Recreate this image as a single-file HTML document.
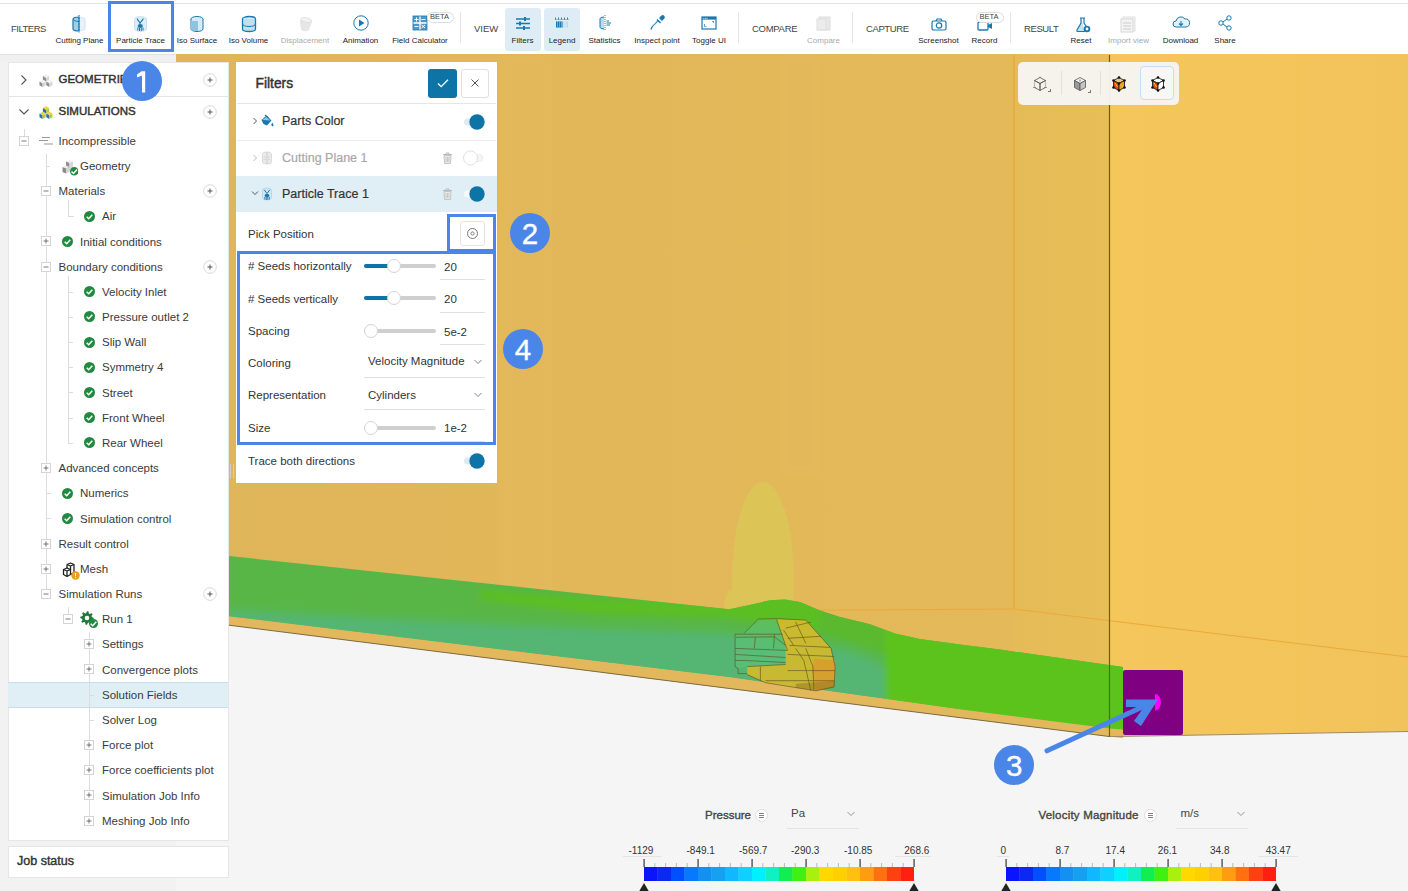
<!DOCTYPE html><html><head><meta charset="utf-8"><style>
html,body{margin:0;padding:0;}
body{width:1408px;height:891px;overflow:hidden;position:relative;background:#f2f2f2;font-family:"Liberation Sans",sans-serif;}
.a{position:absolute;}
.t{position:absolute;white-space:nowrap;}
</style></head><body>

<svg class="a" style="left:0;top:0" width="1408" height="891" viewBox="0 0 1408 891"><rect x="176" y="54" width="1232" height="837" fill="#f5f5f5"/><defs><linearGradient id="gl" x1="0" y1="0" x2="1" y2="0"><stop offset="0" stop-color="#dfb55a"/><stop offset="1" stop-color="#e4b959"/></linearGradient><linearGradient id="gm" x1="0" y1="0" x2="1" y2="0"><stop offset="0" stop-color="#e5bb58"/><stop offset="1" stop-color="#e8be58"/></linearGradient><linearGradient id="gr" x1="0" y1="0" x2="1" y2="0"><stop offset="0" stop-color="#f5c65a"/><stop offset="1" stop-color="#f1c35b"/></linearGradient><filter id="bl" x="-10%" y="-10%" width="120%" height="120%"><feGaussianBlur stdDeviation="3"/></filter><filter id="bl2" x="-10%" y="-10%" width="120%" height="120%"><feGaussianBlur stdDeviation="1.2"/></filter></defs><polygon points="176,54 1014,54 1014,724.5 176,618.5" fill="url(#gl)"/><polygon points="1014,54 1110,54 1110,736.6 1014,724.5" fill="url(#gm)"/><polygon points="1110,54 1408,54 1408,731.5 1110,736.6" fill="url(#gr)"/><rect x="498" y="55" width="55" height="540" fill="#e6bc5f" opacity="0.35" filter="url(#bl)"/><rect x="780" y="55" width="40" height="420" fill="#e6bb5e" opacity="0.3" filter="url(#bl)"/><line x1="1014" y1="55" x2="1014" y2="609" stroke="#e2ad3a" stroke-width="1.6"/><polyline points="700,611 1013.7,609 1408,657" fill="none" stroke="#eaa93a" stroke-width="1"/><path d="M733,605 C728,545 742,482 763,482 C784,482 798,545 793,605 Z" fill="#dcc457"/><path d="M724,610 C724,598 728,590 731,590 C734,590 738,598 738,610 Z" fill="#dcc457"/><polygon points="229,556 729,609.2 745,605.9 770,600.3 785,599.4 800,602 820,610.5 840,617 870,624.3 895,633.6 920,639 960,644.6 1000,649.6 1123,667 1123,729.5 1110,728.5 960,709.3 729,677 229,616.3" fill="#58b646"/><polygon points="229,616.3 729,677 960,709.3 1123,729.5 1123,738.3 229,625.2" fill="#e3b85c"/><clipPath id="gclip"><polygon points="229,556 729,609.2 745,605.9 770,600.3 785,599.4 800,602 820,610.5 840,617 870,624.3 895,633.6 920,639 960,644.6 1000,649.6 1123,667 1123,729.5 1110,728.5 960,709.3 729,677 229,616.3"/></clipPath><g clip-path="url(#gclip)"><g filter="url(#bl)"><polygon points="200,610 400,621 560,629 729,635 760,640 850,652 885,668 885,760 200,760" fill="#54b573"/><polygon points="200,604 560,622 729,628 850,643 885,655 885,668 850,652 760,640 729,635 560,629 400,621 200,610" fill="#57b65a" opacity="0.7"/><polygon points="480,590 580,598 729,604 745,600 770,595 785,594 800,597 820,605 820,630 729,618 600,614 480,600" fill="#5bc01d" opacity="0.9"/><polygon points="885,600 1200,600 1200,760 885,760" fill="#5cc31c"/><polygon points="820,600 885,600 885,655 850,643 820,635" fill="#5ab92e"/></g></g><polygon points="735.1,634.2 744.2,633.2 758.3,619.1 776.5,618.6 785.6,645.4 785.6,664.5 747.2,666.6 738.1,668.6 735.1,666.6" fill="#5fc27a" opacity="0.55"/><polygon points="776.5,619.1 805.8,620.1 831.1,648.4 835.1,666.6 834.1,686.8 815.9,690.8 765.4,682.7 747.2,674.6 747.2,666.6 785.6,664.5 785.6,645.4" fill="#d2ba2e" opacity="0.92"/><polygon points="813.9,658.5 835.1,660.5 834.1,686.8 815.9,689.8 811.9,670.6" fill="#d89a2c" opacity="0.8"/><polygon points="795.7,683.7 835.1,680.7 834.1,687.8 815.9,690.8 795.7,687.8" fill="#8a6a20" opacity="0.45"/><g fill="none" stroke="#5a4a20" stroke-width="0.7" opacity="0.85"><polyline points="758.3,619.1 776.5,618.6 805.8,620.1"/><polyline points="744.2,633.2 758.3,619.1"/><polyline points="735.1,634.2 782.6,634.2"/><polyline points="735.1,634.2 735.1,666.6 738.1,668.6 738.1,673.6 747.2,673.6"/><polyline points="736.1,637.3 774.5,636.8 785.6,645.4"/><polyline points="755.3,637.3 754.3,648.4"/><polyline points="774.5,634.2 773.5,648.4"/><polyline points="735.1,648.4 787.6,650.4"/><polyline points="735.1,654.4 785.6,657.5"/><polyline points="735.1,660.5 745.2,660.5 785.6,662.5"/><polyline points="747.2,666.6 785.6,664.5"/><polyline points="776.5,619.1 785.6,645.4 787.6,650.4"/><polyline points="805.8,620.1 831.1,648.4 835.1,666.6 834.1,686.8 815.9,690.8 765.4,682.7 747.2,674.6"/><polyline points="785.6,628.2 810.9,622.1"/><polyline points="787.6,638.3 821.0,636.3"/><polyline points="789.6,645.4 830.1,647.4"/><polyline points="795.7,622.1 805.8,643.3"/><polyline points="783.6,630.2 793.7,645.4"/><polyline points="795.7,648.4 803.8,660.5 810.9,690.8"/><polyline points="805.8,648.4 812.9,666.6 813.9,689.8"/><polyline points="787.6,654.4 834.1,656.5"/><polyline points="787.6,670.6 835.1,670.6"/><polyline points="765.4,680.7 834.1,680.7"/><polyline points="760.4,666.6 760.4,680.7"/></g><line x1="176" y1="618.5" x2="1110" y2="736.6" stroke="#7a6a48" stroke-width="1"/><line x1="1110" y1="736.6" x2="1408" y2="731.5" stroke="#9a8a68" stroke-width="1"/><line x1="1109.5" y1="55" x2="1109.5" y2="736.6" stroke="#76581c" stroke-width="1.2"/><rect x="1123" y="670" width="60" height="65" rx="2" fill="#7f0081"/><path d="M1155,694 A6,8.3 0 0 1 1155,710.6 Z" fill="#ff00ff"/></svg>
<div class="a" style="left:0px;top:0px;width:1408px;height:54px;background:#fff;"></div>
<div class="a" style="left:0px;top:3px;width:1408px;height:1px;background:#e4e4e4;"></div>
<div class="a" style="left:0px;top:54px;width:176px;height:8px;background:#f0f0f0;"></div>
<div class="a" style="left:0px;top:54px;width:176px;height:1px;background:#e2e2e2;"></div>
<div class="t" style="left:11px;top:23.96px;font-size:9.5px;line-height:9.5px;color:#444;font-weight:normal;letter-spacing:-0.5px;">FILTERS</div>
<div class="t" style="left:474px;top:23.96px;font-size:9.5px;line-height:9.5px;color:#444;font-weight:normal;">VIEW</div>
<div class="t" style="left:752px;top:23.96px;font-size:9.5px;line-height:9.5px;color:#444;font-weight:normal;letter-spacing:-0.3px;">COMPARE</div>
<div class="t" style="left:866px;top:23.96px;font-size:9.5px;line-height:9.5px;color:#444;font-weight:normal;letter-spacing:-0.4px;">CAPTURE</div>
<div class="t" style="left:1024px;top:23.96px;font-size:9.5px;line-height:9.5px;color:#444;font-weight:normal;letter-spacing:-0.4px;">RESULT</div>
<div class="a" style="left:460px;top:12px;width:1px;height:31px;background:#e6e6e6;"></div>
<div class="a" style="left:738px;top:12px;width:1px;height:31px;background:#e6e6e6;"></div>
<div class="a" style="left:852px;top:12px;width:1px;height:31px;background:#e6e6e6;"></div>
<div class="a" style="left:1010px;top:12px;width:1px;height:31px;background:#e6e6e6;"></div>
<div class="a" style="left:505px;top:8px;width:36px;height:43px;background:#deedf5;border-radius:3px;"></div>
<div class="a" style="left:544px;top:8px;width:36px;height:43px;background:#deedf5;border-radius:3px;"></div>
<div class="t" style="left:-20.5px;width:200px;text-align:center;top:36.83px;font-size:8px;line-height:8px;color:#222;font-weight:normal;">Cutting Plane</div>
<div class="t" style="left:40.5px;width:200px;text-align:center;top:36.83px;font-size:8px;line-height:8px;color:#222;font-weight:normal;">Particle Trace</div>
<div class="t" style="left:97.0px;width:200px;text-align:center;top:36.83px;font-size:8px;line-height:8px;color:#222;font-weight:normal;">Iso Surface</div>
<div class="t" style="left:148.5px;width:200px;text-align:center;top:36.83px;font-size:8px;line-height:8px;color:#222;font-weight:normal;">Iso Volume</div>
<div class="t" style="left:205.0px;width:200px;text-align:center;top:36.83px;font-size:8px;line-height:8px;color:#aaa;font-weight:normal;">Displacement</div>
<div class="t" style="left:260.5px;width:200px;text-align:center;top:36.83px;font-size:8px;line-height:8px;color:#222;font-weight:normal;">Animation</div>
<div class="t" style="left:320.0px;width:200px;text-align:center;top:36.83px;font-size:8px;line-height:8px;color:#222;font-weight:normal;">Field Calculator</div>
<div class="t" style="left:422.5px;width:200px;text-align:center;top:36.83px;font-size:8px;line-height:8px;color:#222;font-weight:normal;">Filters</div>
<div class="t" style="left:462.0px;width:200px;text-align:center;top:36.83px;font-size:8px;line-height:8px;color:#222;font-weight:normal;">Legend</div>
<div class="t" style="left:504.5px;width:200px;text-align:center;top:36.83px;font-size:8px;line-height:8px;color:#222;font-weight:normal;">Statistics</div>
<div class="t" style="left:557.0px;width:200px;text-align:center;top:36.83px;font-size:8px;line-height:8px;color:#222;font-weight:normal;">Inspect point</div>
<div class="t" style="left:609.0px;width:200px;text-align:center;top:36.83px;font-size:8px;line-height:8px;color:#222;font-weight:normal;">Toggle UI</div>
<div class="t" style="left:723.5px;width:200px;text-align:center;top:36.83px;font-size:8px;line-height:8px;color:#aaa;font-weight:normal;">Compare</div>
<div class="t" style="left:838.5px;width:200px;text-align:center;top:36.83px;font-size:8px;line-height:8px;color:#222;font-weight:normal;">Screenshot</div>
<div class="t" style="left:884.5px;width:200px;text-align:center;top:36.83px;font-size:8px;line-height:8px;color:#222;font-weight:normal;">Record</div>
<div class="t" style="left:981.0px;width:200px;text-align:center;top:36.83px;font-size:8px;line-height:8px;color:#222;font-weight:normal;">Reset</div>
<div class="t" style="left:1028.5px;width:200px;text-align:center;top:36.83px;font-size:8px;line-height:8px;color:#aaa;font-weight:normal;">Import view</div>
<div class="t" style="left:1080.5px;width:200px;text-align:center;top:36.83px;font-size:8px;line-height:8px;color:#222;font-weight:normal;">Download</div>
<div class="t" style="left:1125.0px;width:200px;text-align:center;top:36.83px;font-size:8px;line-height:8px;color:#222;font-weight:normal;">Share</div>
<svg class="a" style="left:71px;top:14px;" width="16" height="19" viewBox="0 0 16 19"><path d="M8,3 A6,2.3 0 0 1 14,5.3 V14.7 A6,2.3 0 0 1 8,17 Z" fill="#e6f2f9" stroke="#c4e0ee" stroke-width="0.8"/><path d="M8,3 A6,2.3 0 0 0 2,5.3 V14.7 A6,2.3 0 0 0 8,17 Z" fill="#a3cfe6" stroke="#1a78b0" stroke-width="1.2"/><path d="M2.5,5.3 A6,2.3 0 0 0 8,7.6" fill="none" stroke="#1a78b0" stroke-width="0.9"/><path d="M8,1 V18.5" stroke="#1a78b0" stroke-dasharray="1.2,1.6" stroke-width="1.1"/></svg>
<svg class="a" style="left:133px;top:15px;" width="15" height="18" viewBox="0 0 15 18"><path d="M1.5,4 A6,2.4 0 0 1 13.5,4 V14 A6,2.4 0 0 1 1.5,14 Z" fill="#dcedf6" stroke="#c0deed" stroke-width="0.8"/><path d="M4,3.5 L7,8 L10.5,3.5 M7,8 V9.5" fill="none" stroke="#1a78b0" stroke-width="1.1"/><path d="M4.5,5 L6,6 M10,5 L8.5,6" stroke="#1a78b0" stroke-width="0.8"/><ellipse cx="7.3" cy="11" rx="2.6" ry="2" fill="#1a78b0"/><path d="M4.8,12.5 V15.5 M6.5,13 V16 M8.3,13 V16 M10,12.5 V15.5" stroke="#1a78b0" stroke-width="1"/></svg>
<svg class="a" style="left:188.0px;top:14.5px;" width="18" height="18" viewBox="0 0 18 18"><ellipse cx="9" cy="4" rx="6" ry="2.5" fill="#d6ebf5" stroke="#1a78b0" stroke-width="1"/><path d="M3,4 V14 A6,2.5 0 0 0 15,14 V4" fill="#d6ebf5" stroke="#1a78b0" stroke-width="1"/><path d="M3,6 H10 V16 A6,2.5 0 0 1 3,14 Z" fill="#8cc4e2"/></svg>
<svg class="a" style="left:239.5px;top:14.5px;" width="18" height="18" viewBox="0 0 18 18"><ellipse cx="9" cy="4" rx="6.5" ry="2.5" fill="#d6ebf5" stroke="#1a78b0" stroke-width="1.3"/><path d="M2.5,4 V14 A6.5,2.5 0 0 0 15.5,14 V4" fill="#bfe0f0" stroke="#1a78b0" stroke-width="1.3"/><path d="M2.5,9 A6.5,2.5 0 0 0 15.5,9" fill="none" stroke="#1a78b0" stroke-width="1"/></svg>
<svg class="a" style="left:296.5px;top:14.5px;" width="18" height="18" viewBox="0 0 18 18"><path d="M3,6 C3,3.5 8,2 12,3.5 C15,4.5 16,6 15,7 L12,15 C11,17 5,16.5 4,14.5 Z" fill="#e6e6e6"/><ellipse cx="9.3" cy="5" rx="5.5" ry="2.3" transform="rotate(15 9.3 5)" fill="#f2f2f2" stroke="#dcdcdc" stroke-width="0.7"/></svg>
<svg class="a" style="left:351.5px;top:14.0px;" width="18" height="18" viewBox="0 0 18 18"><circle cx="9" cy="9" r="7.2" fill="#fff" stroke="#1a78b0" stroke-width="1"/><path d="M7,5.5 L12.5,9 L7,12.5 Z" fill="#1a78b0"/></svg>
<svg class="a" style="left:411.0px;top:14.0px;" width="18" height="18" viewBox="0 0 18 18"><rect x="2" y="2" width="14" height="14" fill="#4f98c9"/><path d="M9,2 V16 M2,9 H16" stroke="#fff" stroke-width="1.3"/><path d="M3.5,5.5 H7.5 M5.5,3.5 V7.5 M10.5,5.5 H14.5 M3.5,12.5 H7.5 M10.5,11 L14,14 M14,11 L10.5,14" stroke="#fff" stroke-width="1"/><rect x="2" y="2" width="14" height="14" fill="none" stroke="#1a78b0" stroke-width="0.8"/></svg>
<div class="a" style="left:427px;top:11.5px;width:25px;height:9px;border:1px solid #ddd;border-radius:6px;background:#fff;"></div>
<div class="t" style="left:339.5px;width:200px;text-align:center;top:12.95px;font-size:7.5px;line-height:7.5px;color:#444;font-weight:normal;">BETA</div>
<svg class="a" style="left:513.5px;top:14.0px;" width="18" height="18" viewBox="0 0 18 18"><path d="M2,5 H16 M2,9.5 H16 M2,14 H16" stroke="#1a78b0" stroke-width="1.6"/><rect x="10" y="3" width="2" height="4" fill="#1a78b0"/><rect x="5" y="7.5" width="2" height="4" fill="#1a78b0"/><rect x="9" y="12" width="2" height="4" fill="#1a78b0"/></svg>
<svg class="a" style="left:553.0px;top:14.0px;" width="18" height="18" viewBox="0 0 18 18"><path d="M2,5.5 H16" stroke="#6aaad2" stroke-width="0.7"/><path d="M2.5,3.5 V5.5 M5.5,3.5 V5.5 M8.5,3.5 V5.5 M11.5,3.5 V5.5 M14.5,3.5 V5.5" stroke="#1a78b0" stroke-width="0.9"/><rect x="3" y="7.5" width="12" height="6" fill="#b8daee"/><rect x="3" y="7.5" width="6.5" height="6" fill="#1a78b0"/><path d="M4.5,7.5 V13.5 M6.5,7.5 V13.5 M8.5,7.5 V13.5" stroke="#9fd0ea" stroke-width="0.6"/><path d="M11,7.5 V13.5 M13,7.5 V13.5" stroke="#fff" stroke-width="0.6"/></svg>
<svg class="a" style="left:595.5px;top:14.0px;" width="18" height="18" viewBox="0 0 18 18"><path d="M8,3 A4,1.8 0 0 0 4,4.8 V13.2 A4,1.8 0 0 0 8,15" fill="#b8daee" stroke="#1a78b0" stroke-width="1"/><path d="M9,1 V17" stroke="#1a78b0" stroke-dasharray="1,1" stroke-width="0.9"/><path d="M10.5,7 H13 M10.5,9 H15 M10.5,11 H14" stroke="#1a78b0" stroke-width="1.1"/></svg>
<svg class="a" style="left:648.0px;top:14.0px;" width="18" height="18" viewBox="0 0 18 18"><path d="M3,15.5 L4,13 L10,7" stroke="#1a78b0" stroke-width="1.3" fill="none"/><path d="M9,5.5 L12.5,9" stroke="#1a78b0" stroke-width="1.6"/><path d="M11,4 L13.2,1.8 A2,2 0 0 1 16.2,4.8 L14,7 Z" fill="#1a78b0"/><path d="M4.8,12.5 L9.8,7.5 L10.5,8.2 L5.5,13.2 Z" fill="#d6ebf5"/></svg>
<svg class="a" style="left:700.0px;top:14.0px;" width="18" height="18" viewBox="0 0 18 18"><rect x="2" y="3" width="14" height="12" fill="#fff" stroke="#1a78b0" stroke-width="1.2"/><rect x="2" y="3" width="14" height="2.6" fill="#1a78b0"/><circle cx="3.8" cy="4.3" r="0.55" fill="#fff"/><circle cx="5.4" cy="4.3" r="0.55" fill="#fff"/><circle cx="7" cy="4.3" r="0.55" fill="#fff"/><path d="M4.5,10 V12.5 H6.5 M12,7.5 H13.5 V9" stroke="#1a78b0" stroke-width="0.7" fill="none"/></svg>
<svg class="a" style="left:814.5px;top:14.0px;" width="18" height="18" viewBox="0 0 18 18"><rect x="4" y="3" width="11" height="13" fill="#e8e8e8" stroke="#ddd"/><rect x="2" y="5" width="9" height="11" fill="#ececec" stroke="#ddd"/></svg>
<svg class="a" style="left:929.5px;top:14.5px;" width="18" height="18" viewBox="0 0 18 18"><rect x="2" y="6" width="14" height="9" rx="1.5" fill="#fff" stroke="#1a78b0" stroke-width="1.2"/><path d="M6,6 L7,4 H11 L12,6" fill="none" stroke="#1a78b0" stroke-width="1.2"/><circle cx="9" cy="10.5" r="2.7" fill="none" stroke="#1a78b0" stroke-width="1.2"/></svg>
<svg class="a" style="left:975.5px;top:17.0px;" width="18" height="18" viewBox="0 0 18 18"><rect x="2" y="5" width="10" height="8" rx="1" fill="#fff" stroke="#1a78b0" stroke-width="1.3"/><path d="M12,8 L16,6 V12 L12,10" fill="#1a78b0"/></svg>
<div class="a" style="left:976px;top:11.5px;width:26px;height:9px;border:1px solid #ddd;border-radius:6px;background:#fff;"></div>
<div class="t" style="left:889px;width:200px;text-align:center;top:12.95px;font-size:7.5px;line-height:7.5px;color:#444;font-weight:normal;">BETA</div>
<svg class="a" style="left:1073.5px;top:15.5px;" width="18" height="18" viewBox="0 0 18 18"><path d="M6,2 H11 M7,2 V7 L3,14 A1,1 0 0 0 4,15.5 H11" fill="#c6e2f1" stroke="#1a78b0" stroke-width="1.2"/><path d="M10,2 V7 L12,10" fill="none" stroke="#1a78b0" stroke-width="1.2"/><circle cx="13" cy="13" r="3.3" fill="#1a78b0"/><circle cx="13" cy="13" r="1.4" fill="#fff"/></svg>
<svg class="a" style="left:1119.0px;top:14.5px;" width="18" height="18" viewBox="0 0 18 18"><rect x="4" y="2" width="12" height="14" fill="#f4f4f4" stroke="#e0e0e0"/><rect x="2" y="4" width="12" height="13" fill="#f4f4f4" stroke="#d8d8d8"/><path d="M4,8 H12 M4,11 H12 M4,14 H12" stroke="#ccc"/></svg>
<svg class="a" style="left:1172.0px;top:13.0px;" width="18" height="18" viewBox="0 0 18 18"><path d="M4,14 A3,3 0 0 1 4,8 A5,5 0 0 1 13,6 A4,4 0 0 1 14,14 Z" fill="#e3f0f7" stroke="#1a78b0" stroke-width="1"/><path d="M9,8 V12.5 M7,10.5 L9,12.5 L11,10.5" stroke="#1a78b0" stroke-width="1.1" fill="none"/></svg>
<svg class="a" style="left:1216.0px;top:13.5px;" width="18" height="18" viewBox="0 0 18 18"><circle cx="13" cy="4" r="2.2" fill="#fff" stroke="#1a78b0"/><circle cx="5" cy="9" r="2.2" fill="#fff" stroke="#1a78b0"/><circle cx="13" cy="14" r="2.2" fill="#fff" stroke="#1a78b0"/><path d="M7,8 L11,5 M7,10 L11,13" stroke="#1a78b0"/></svg>
<div class="a" style="left:8px;top:62px;width:220px;height:778px;background:#fff;border:1px solid #e6e6e6;box-sizing:border-box;width:221px;height:779px;"></div>
<div class="a" style="left:9px;top:96px;width:219px;height:1px;background:#e4e4e4;"></div>
<svg class="a" style="left:19px;top:74px;" width="10" height="12" viewBox="0 0 10 12"><path d="M2.5,1.5 L7,6 L2.5,10.5" fill="none" stroke="#555" stroke-width="1.1"/></svg>
<svg class="a" style="left:18px;top:107px;" width="12" height="10" viewBox="0 0 12 10"><path d="M1.5,2.5 L6,7 L10.5,2.5" fill="none" stroke="#555" stroke-width="1.1"/></svg>
<svg class="a" style="left:39px;top:73.5px;" width="16" height="14" viewBox="0 0 16 14"><path d="M7,0.3 L10.12,2.10 L7,3.90 L3.88,2.10 Z" fill="#f0f0f0"/><path d="M3.88,2.10 L7,3.90 L7,7.50 L3.88,5.70 Z" fill="#8e8e8e"/><path d="M7,3.90 L10.12,2.10 L10.12,5.70 L7,7.50 Z" fill="#d6d6d6"/><path d="M3.6,5.8 L6.72,7.60 L3.6,9.40 L0.48,7.60 Z" fill="#f0f0f0"/><path d="M0.48,7.60 L3.6,9.40 L3.6,13.00 L0.48,11.20 Z" fill="#8e8e8e"/><path d="M3.6,9.40 L6.72,7.60 L6.72,11.20 L3.6,13.00 Z" fill="#d6d6d6"/><path d="M10.4,5.8 L13.52,7.60 L10.4,9.40 L7.28,7.60 Z" fill="#f0f0f0"/><path d="M7.28,7.60 L10.4,9.40 L10.4,13.00 L7.28,11.20 Z" fill="#8e8e8e"/><path d="M10.4,9.40 L13.52,7.60 L13.52,11.20 L10.4,13.00 Z" fill="#d6d6d6"/></svg>
<svg class="a" style="left:39px;top:105.5px;" width="16" height="14" viewBox="0 0 16 14"><path d="M7,0.3 L10.12,2.10 L7,3.90 L3.88,2.10 Z" fill="#f2d13a"/><path d="M3.88,2.10 L7,3.90 L7,7.50 L3.88,5.70 Z" fill="#1a72c0"/><path d="M7,3.90 L10.12,2.10 L10.12,5.70 L7,7.50 Z" fill="#b4cc3a"/><path d="M3.6,5.8 L6.72,7.60 L3.6,9.40 L0.48,7.60 Z" fill="#f2d13a"/><path d="M0.48,7.60 L3.6,9.40 L3.6,13.00 L0.48,11.20 Z" fill="#1a72c0"/><path d="M3.6,9.40 L6.72,7.60 L6.72,11.20 L3.6,13.00 Z" fill="#b4cc3a"/><path d="M10.4,5.8 L13.52,7.60 L10.4,9.40 L7.28,7.60 Z" fill="#f2d13a"/><path d="M7.28,7.60 L10.4,9.40 L10.4,13.00 L7.28,11.20 Z" fill="#1a72c0"/><path d="M10.4,9.40 L13.52,7.60 L13.52,11.20 L10.4,13.00 Z" fill="#b4cc3a"/></svg>
<div class="t" style="left:58.5px;top:74.27px;font-size:11.5px;line-height:11.5px;color:#333;font-weight:normal;-webkit-text-stroke:0.45px #333;">GEOMETRIES</div>
<div class="t" style="left:58.5px;top:106.27px;font-size:11.5px;line-height:11.5px;color:#333;font-weight:normal;-webkit-text-stroke:0.45px #333;">SIMULATIONS</div>
<svg class="a" style="left:203px;top:72.7px;" width="14" height="14" viewBox="0 0 14 14"><circle cx="7" cy="7" r="6.3" fill="#fff" stroke="#d8d8d8" stroke-width="1"/><path d="M4.5,7 H9.5 M7,4.5 V9.5" stroke="#555" stroke-width="1"/></svg>
<svg class="a" style="left:203px;top:105px;" width="14" height="14" viewBox="0 0 14 14"><circle cx="7" cy="7" r="6.3" fill="#fff" stroke="#d8d8d8" stroke-width="1"/><path d="M4.5,7 H9.5 M7,4.5 V9.5" stroke="#555" stroke-width="1"/></svg>
<div class="a" style="left:8px;top:682px;width:220px;height:26px;background:#e0eef6;border-top:1px solid #c4deec;border-bottom:1px solid #c4deec;box-sizing:border-box;"></div>
<div class="a" style="left:24px;top:129px;width:1px;height:7px;background:#dcdcdc;"></div>
<div class="a" style="left:46px;top:154px;width:1px;height:440px;background:#dcdcdc;"></div>
<div class="a" style="left:68px;top:200px;width:1px;height:16px;background:#dcdcdc;"></div>
<div class="a" style="left:68px;top:216px;width:6px;height:1px;background:#dcdcdc;"></div>
<div class="a" style="left:68px;top:276px;width:1px;height:167px;background:#dcdcdc;"></div>
<div class="a" style="left:68px;top:292px;width:5px;height:1px;background:#dcdcdc;"></div>
<div class="a" style="left:68px;top:317px;width:5px;height:1px;background:#dcdcdc;"></div>
<div class="a" style="left:68px;top:342px;width:5px;height:1px;background:#dcdcdc;"></div>
<div class="a" style="left:68px;top:367px;width:5px;height:1px;background:#dcdcdc;"></div>
<div class="a" style="left:68px;top:392px;width:5px;height:1px;background:#dcdcdc;"></div>
<div class="a" style="left:68px;top:418px;width:5px;height:1px;background:#dcdcdc;"></div>
<div class="a" style="left:68px;top:443px;width:5px;height:1px;background:#dcdcdc;"></div>
<div class="a" style="left:46px;top:166px;width:4px;height:1px;background:#dcdcdc;"></div>
<div class="a" style="left:46px;top:493px;width:5px;height:1px;background:#dcdcdc;"></div>
<div class="a" style="left:46px;top:518px;width:5px;height:1px;background:#dcdcdc;"></div>
<div class="a" style="left:68px;top:607px;width:1px;height:7px;background:#dcdcdc;"></div>
<div class="a" style="left:89px;top:632px;width:1px;height:189px;background:#dcdcdc;"></div>
<div class="a" style="left:89px;top:695px;width:5px;height:1px;background:#dcdcdc;"></div>
<div class="a" style="left:89px;top:720px;width:5px;height:1px;background:#dcdcdc;"></div>
<svg class="a" style="left:19px;top:135.7px;" width="10" height="10" viewBox="0 0 10 10"><rect x="0.5" y="0.5" width="9" height="9" fill="#fff" stroke="#d4d4d4"/><path d="M2.5,5 H7.5" stroke="#555" stroke-width="0.8"/></svg>
<svg class="a" style="left:39px;top:135.7px;" width="15" height="10" viewBox="0 0 15 10"><path d="M3,1.5 H11 M0,4.5 H9 M5,8 H14" stroke="#999" stroke-width="1.2"/></svg>
<div class="t" style="left:58.5px;top:135.87px;font-size:11.5px;line-height:11.5px;color:#3a3a3a;font-weight:normal;">Incompressible</div>
<svg class="a" style="left:62px;top:158.88px;" width="14" height="16" viewBox="0 0 14 16"><path d="M4,2.5 L7.5,1 L11,2.5 L7.5,4 Z" fill="#f0f0f0"/><path d="M4,2.5 L7.5,4 V12 L4,10.5 Z" fill="#8e8e8e"/><path d="M7.5,4 L11,2.5 V11 L7.5,12.5 Z" fill="#d8d8d8"/><path d="M0.5,8 L4,6.5 L7.5,8 L4,9.5 Z" fill="#ececec"/><path d="M0.5,8 L4,9.5 V14.5 L0.5,13 Z" fill="#8a8a8a"/><path d="M4,9.5 L7.5,8 V13 L4,14.5 Z" fill="#d4d4d4"/></svg>
<svg class="a" style="left:69.7px;top:167.07999999999998px;" width="8.6" height="8.6" viewBox="0 0 8.6 8.6"><circle cx="4.3" cy="4.3" r="4.3" fill="#1f8a40"/><path d="M1.5,4.5 L3.5,6.5 L7.1,2.5" fill="none" stroke="#fff" stroke-width="1.5"/></svg>
<div class="t" style="left:80px;top:161.05px;font-size:11.5px;line-height:11.5px;color:#3a3a3a;font-weight:normal;">Geometry</div>
<svg class="a" style="left:41px;top:186.06px;" width="10" height="10" viewBox="0 0 10 10"><rect x="0.5" y="0.5" width="9" height="9" fill="#fff" stroke="#d4d4d4"/><path d="M2.5,5 H7.5" stroke="#555" stroke-width="0.8"/></svg>
<div class="t" style="left:58.5px;top:186.23px;font-size:11.5px;line-height:11.5px;color:#3a3a3a;font-weight:normal;">Materials</div>
<svg class="a" style="left:83.5px;top:210.73999999999998px;" width="11.0" height="11.0" viewBox="0 0 11.0 11.0"><circle cx="5.5" cy="5.5" r="5.5" fill="#1f8a40"/><path d="M2.7,5.7 L4.7,7.7 L8.3,3.7" fill="none" stroke="#fff" stroke-width="1.5"/></svg>
<div class="t" style="left:102px;top:211.41px;font-size:11.5px;line-height:11.5px;color:#3a3a3a;font-weight:normal;">Air</div>
<svg class="a" style="left:41px;top:236.42px;" width="10" height="10" viewBox="0 0 10 10"><rect x="0.5" y="0.5" width="9" height="9" fill="#fff" stroke="#d4d4d4"/><path d="M2.5,5 H7.5" stroke="#555" stroke-width="0.8"/><path d="M5,2.5 V7.5" stroke="#555" stroke-width="0.8"/></svg>
<svg class="a" style="left:61.5px;top:235.92px;" width="11.0" height="11.0" viewBox="0 0 11.0 11.0"><circle cx="5.5" cy="5.5" r="5.5" fill="#1f8a40"/><path d="M2.7,5.7 L4.7,7.7 L8.3,3.7" fill="none" stroke="#fff" stroke-width="1.5"/></svg>
<div class="t" style="left:80px;top:236.59px;font-size:11.5px;line-height:11.5px;color:#3a3a3a;font-weight:normal;">Initial conditions</div>
<svg class="a" style="left:41px;top:261.6px;" width="10" height="10" viewBox="0 0 10 10"><rect x="0.5" y="0.5" width="9" height="9" fill="#fff" stroke="#d4d4d4"/><path d="M2.5,5 H7.5" stroke="#555" stroke-width="0.8"/></svg>
<div class="t" style="left:58.5px;top:261.77px;font-size:11.5px;line-height:11.5px;color:#3a3a3a;font-weight:normal;">Boundary conditions</div>
<svg class="a" style="left:83.5px;top:286.28px;" width="11.0" height="11.0" viewBox="0 0 11.0 11.0"><circle cx="5.5" cy="5.5" r="5.5" fill="#1f8a40"/><path d="M2.7,5.7 L4.7,7.7 L8.3,3.7" fill="none" stroke="#fff" stroke-width="1.5"/></svg>
<div class="t" style="left:102px;top:286.95px;font-size:11.5px;line-height:11.5px;color:#3a3a3a;font-weight:normal;">Velocity Inlet</div>
<svg class="a" style="left:83.5px;top:311.46px;" width="11.0" height="11.0" viewBox="0 0 11.0 11.0"><circle cx="5.5" cy="5.5" r="5.5" fill="#1f8a40"/><path d="M2.7,5.7 L4.7,7.7 L8.3,3.7" fill="none" stroke="#fff" stroke-width="1.5"/></svg>
<div class="t" style="left:102px;top:312.13px;font-size:11.5px;line-height:11.5px;color:#3a3a3a;font-weight:normal;">Pressure outlet 2</div>
<svg class="a" style="left:83.5px;top:336.64px;" width="11.0" height="11.0" viewBox="0 0 11.0 11.0"><circle cx="5.5" cy="5.5" r="5.5" fill="#1f8a40"/><path d="M2.7,5.7 L4.7,7.7 L8.3,3.7" fill="none" stroke="#fff" stroke-width="1.5"/></svg>
<div class="t" style="left:102px;top:337.31px;font-size:11.5px;line-height:11.5px;color:#3a3a3a;font-weight:normal;">Slip Wall</div>
<svg class="a" style="left:83.5px;top:361.82px;" width="11.0" height="11.0" viewBox="0 0 11.0 11.0"><circle cx="5.5" cy="5.5" r="5.5" fill="#1f8a40"/><path d="M2.7,5.7 L4.7,7.7 L8.3,3.7" fill="none" stroke="#fff" stroke-width="1.5"/></svg>
<div class="t" style="left:102px;top:362.49px;font-size:11.5px;line-height:11.5px;color:#3a3a3a;font-weight:normal;">Symmetry 4</div>
<svg class="a" style="left:83.5px;top:387.0px;" width="11.0" height="11.0" viewBox="0 0 11.0 11.0"><circle cx="5.5" cy="5.5" r="5.5" fill="#1f8a40"/><path d="M2.7,5.7 L4.7,7.7 L8.3,3.7" fill="none" stroke="#fff" stroke-width="1.5"/></svg>
<div class="t" style="left:102px;top:387.67px;font-size:11.5px;line-height:11.5px;color:#3a3a3a;font-weight:normal;">Street</div>
<svg class="a" style="left:83.5px;top:412.18px;" width="11.0" height="11.0" viewBox="0 0 11.0 11.0"><circle cx="5.5" cy="5.5" r="5.5" fill="#1f8a40"/><path d="M2.7,5.7 L4.7,7.7 L8.3,3.7" fill="none" stroke="#fff" stroke-width="1.5"/></svg>
<div class="t" style="left:102px;top:412.85px;font-size:11.5px;line-height:11.5px;color:#3a3a3a;font-weight:normal;">Front Wheel</div>
<svg class="a" style="left:83.5px;top:437.35999999999996px;" width="11.0" height="11.0" viewBox="0 0 11.0 11.0"><circle cx="5.5" cy="5.5" r="5.5" fill="#1f8a40"/><path d="M2.7,5.7 L4.7,7.7 L8.3,3.7" fill="none" stroke="#fff" stroke-width="1.5"/></svg>
<div class="t" style="left:102px;top:438.03px;font-size:11.5px;line-height:11.5px;color:#3a3a3a;font-weight:normal;">Rear Wheel</div>
<svg class="a" style="left:41px;top:463.03999999999996px;" width="10" height="10" viewBox="0 0 10 10"><rect x="0.5" y="0.5" width="9" height="9" fill="#fff" stroke="#d4d4d4"/><path d="M2.5,5 H7.5" stroke="#555" stroke-width="0.8"/><path d="M5,2.5 V7.5" stroke="#555" stroke-width="0.8"/></svg>
<div class="t" style="left:58.5px;top:463.21px;font-size:11.5px;line-height:11.5px;color:#3a3a3a;font-weight:normal;">Advanced concepts</div>
<svg class="a" style="left:61.5px;top:487.71999999999997px;" width="11.0" height="11.0" viewBox="0 0 11.0 11.0"><circle cx="5.5" cy="5.5" r="5.5" fill="#1f8a40"/><path d="M2.7,5.7 L4.7,7.7 L8.3,3.7" fill="none" stroke="#fff" stroke-width="1.5"/></svg>
<div class="t" style="left:80px;top:488.39px;font-size:11.5px;line-height:11.5px;color:#3a3a3a;font-weight:normal;">Numerics</div>
<svg class="a" style="left:61.5px;top:512.9px;" width="11.0" height="11.0" viewBox="0 0 11.0 11.0"><circle cx="5.5" cy="5.5" r="5.5" fill="#1f8a40"/><path d="M2.7,5.7 L4.7,7.7 L8.3,3.7" fill="none" stroke="#fff" stroke-width="1.5"/></svg>
<div class="t" style="left:80px;top:513.57px;font-size:11.5px;line-height:11.5px;color:#3a3a3a;font-weight:normal;">Simulation control</div>
<svg class="a" style="left:41px;top:538.5799999999999px;" width="10" height="10" viewBox="0 0 10 10"><rect x="0.5" y="0.5" width="9" height="9" fill="#fff" stroke="#d4d4d4"/><path d="M2.5,5 H7.5" stroke="#555" stroke-width="0.8"/><path d="M5,2.5 V7.5" stroke="#555" stroke-width="0.8"/></svg>
<div class="t" style="left:58.5px;top:538.75px;font-size:11.5px;line-height:11.5px;color:#3a3a3a;font-weight:normal;">Result control</div>
<svg class="a" style="left:41px;top:563.76px;" width="10" height="10" viewBox="0 0 10 10"><rect x="0.5" y="0.5" width="9" height="9" fill="#fff" stroke="#d4d4d4"/><path d="M2.5,5 H7.5" stroke="#555" stroke-width="0.8"/><path d="M5,2.5 V7.5" stroke="#555" stroke-width="0.8"/></svg>
<svg class="a" style="left:62px;top:561.76px;" width="14" height="16" viewBox="0 0 14 16"><g fill="none" stroke="#222" stroke-width="1.3" stroke-linejoin="round"><path d="M5,2.5 L8.5,1 L12,2.5 V10.5 L8.5,12.5"/><path d="M5,2.5 L8.5,4 L12,2.5 M8.5,4 V8"/><path d="M5,2.5 V6"/><path d="M1.5,7.5 L5,6 L8.5,7.5 V12.5 L5,14.5 L1.5,12.5 Z M1.5,7.5 L5,9 L8.5,7.5 M5,9 V14.5"/></g></svg>
<svg class="a" style="left:70.5px;top:570.76px;" width="9" height="9" viewBox="0 0 9 9"><circle cx="4.5" cy="4.5" r="4.2" fill="#e3a018"/><path d="M4.5,2 V5.2 M4.5,6.2 V7.2" stroke="#fff" stroke-width="1.1"/></svg>
<div class="t" style="left:80px;top:563.93px;font-size:11.5px;line-height:11.5px;color:#3a3a3a;font-weight:normal;">Mesh</div>
<svg class="a" style="left:41px;top:588.94px;" width="10" height="10" viewBox="0 0 10 10"><rect x="0.5" y="0.5" width="9" height="9" fill="#fff" stroke="#d4d4d4"/><path d="M2.5,5 H7.5" stroke="#555" stroke-width="0.8"/></svg>
<div class="t" style="left:58.5px;top:589.11px;font-size:11.5px;line-height:11.5px;color:#3a3a3a;font-weight:normal;">Simulation Runs</div>
<svg class="a" style="left:63px;top:614.12px;" width="10" height="10" viewBox="0 0 10 10"><rect x="0.5" y="0.5" width="9" height="9" fill="#fff" stroke="#d4d4d4"/><path d="M2.5,5 H7.5" stroke="#555" stroke-width="0.8"/></svg>
<svg class="a" style="left:80px;top:611.12px;" width="18" height="16" viewBox="0 0 18 16"><path d="M7.00,0.20 L8.33,0.33 L8.88,2.47 L9.72,2.93 L11.81,2.19 L12.65,3.22 L11.53,5.12 L11.81,6.04 L13.80,7.00 L13.67,8.33 L11.53,8.88 L11.07,9.72 L11.81,11.81 L10.78,12.65 L8.88,11.53 L7.96,11.81 L7.00,13.80 L5.67,13.67 L5.12,11.53 L4.28,11.07 L2.19,11.81 L1.35,10.78 L2.47,8.88 L2.19,7.96 L0.20,7.00 L0.33,5.67 L2.47,5.12 L2.93,4.28 L2.19,2.19 L3.22,1.35 L5.12,2.47 L6.04,2.19 Z" fill="#1f7a3a"/><circle cx="7" cy="7" r="2.3" fill="#fff"/></svg>
<svg class="a" style="left:89.0px;top:619.12px;" width="9.0" height="9.0" viewBox="0 0 9.0 9.0"><circle cx="4.5" cy="4.5" r="4.5" fill="#1f8a40"/><path d="M1.7000000000000002,4.7 L3.7,6.7 L7.3,2.7" fill="none" stroke="#fff" stroke-width="1.5"/></svg>
<div class="t" style="left:102px;top:614.29px;font-size:11.5px;line-height:11.5px;color:#3a3a3a;font-weight:normal;">Run 1</div>
<svg class="a" style="left:84px;top:639.3px;" width="10" height="10" viewBox="0 0 10 10"><rect x="0.5" y="0.5" width="9" height="9" fill="#fff" stroke="#d4d4d4"/><path d="M2.5,5 H7.5" stroke="#555" stroke-width="0.8"/><path d="M5,2.5 V7.5" stroke="#555" stroke-width="0.8"/></svg>
<div class="t" style="left:102px;top:639.47px;font-size:11.5px;line-height:11.5px;color:#3a3a3a;font-weight:normal;">Settings</div>
<svg class="a" style="left:84px;top:664.48px;" width="10" height="10" viewBox="0 0 10 10"><rect x="0.5" y="0.5" width="9" height="9" fill="#fff" stroke="#d4d4d4"/><path d="M2.5,5 H7.5" stroke="#555" stroke-width="0.8"/><path d="M5,2.5 V7.5" stroke="#555" stroke-width="0.8"/></svg>
<div class="t" style="left:102px;top:664.65px;font-size:11.5px;line-height:11.5px;color:#3a3a3a;font-weight:normal;">Convergence plots</div>
<div class="t" style="left:102px;top:689.83px;font-size:11.5px;line-height:11.5px;color:#3a3a3a;font-weight:normal;">Solution Fields</div>
<div class="t" style="left:102px;top:715.01px;font-size:11.5px;line-height:11.5px;color:#3a3a3a;font-weight:normal;">Solver Log</div>
<svg class="a" style="left:84px;top:740.02px;" width="10" height="10" viewBox="0 0 10 10"><rect x="0.5" y="0.5" width="9" height="9" fill="#fff" stroke="#d4d4d4"/><path d="M2.5,5 H7.5" stroke="#555" stroke-width="0.8"/><path d="M5,2.5 V7.5" stroke="#555" stroke-width="0.8"/></svg>
<div class="t" style="left:102px;top:740.19px;font-size:11.5px;line-height:11.5px;color:#3a3a3a;font-weight:normal;">Force plot</div>
<svg class="a" style="left:84px;top:765.2px;" width="10" height="10" viewBox="0 0 10 10"><rect x="0.5" y="0.5" width="9" height="9" fill="#fff" stroke="#d4d4d4"/><path d="M2.5,5 H7.5" stroke="#555" stroke-width="0.8"/><path d="M5,2.5 V7.5" stroke="#555" stroke-width="0.8"/></svg>
<div class="t" style="left:102px;top:765.37px;font-size:11.5px;line-height:11.5px;color:#3a3a3a;font-weight:normal;">Force coefficients plot</div>
<svg class="a" style="left:84px;top:790.3799999999999px;" width="10" height="10" viewBox="0 0 10 10"><rect x="0.5" y="0.5" width="9" height="9" fill="#fff" stroke="#d4d4d4"/><path d="M2.5,5 H7.5" stroke="#555" stroke-width="0.8"/><path d="M5,2.5 V7.5" stroke="#555" stroke-width="0.8"/></svg>
<div class="t" style="left:102px;top:790.55px;font-size:11.5px;line-height:11.5px;color:#3a3a3a;font-weight:normal;">Simulation Job Info</div>
<svg class="a" style="left:84px;top:815.56px;" width="10" height="10" viewBox="0 0 10 10"><rect x="0.5" y="0.5" width="9" height="9" fill="#fff" stroke="#d4d4d4"/><path d="M2.5,5 H7.5" stroke="#555" stroke-width="0.8"/><path d="M5,2.5 V7.5" stroke="#555" stroke-width="0.8"/></svg>
<div class="t" style="left:102px;top:815.73px;font-size:11.5px;line-height:11.5px;color:#3a3a3a;font-weight:normal;">Meshing Job Info</div>
<svg class="a" style="left:203px;top:184.06px;" width="14" height="14" viewBox="0 0 14 14"><circle cx="7" cy="7" r="6.3" fill="#fff" stroke="#d8d8d8" stroke-width="1"/><path d="M4.5,7 H9.5 M7,4.5 V9.5" stroke="#555" stroke-width="1"/></svg>
<svg class="a" style="left:203px;top:259.6px;" width="14" height="14" viewBox="0 0 14 14"><circle cx="7" cy="7" r="6.3" fill="#fff" stroke="#d8d8d8" stroke-width="1"/><path d="M4.5,7 H9.5 M7,4.5 V9.5" stroke="#555" stroke-width="1"/></svg>
<svg class="a" style="left:203px;top:586.94px;" width="14" height="14" viewBox="0 0 14 14"><circle cx="7" cy="7" r="6.3" fill="#fff" stroke="#d8d8d8" stroke-width="1"/><path d="M4.5,7 H9.5 M7,4.5 V9.5" stroke="#555" stroke-width="1"/></svg>
<div class="a" style="left:8px;top:846px;width:221px;height:32px;background:#fff;border:1px solid #e6e6e6;box-sizing:border-box;"></div>
<div class="t" style="left:17px;top:854.92px;font-size:12.5px;line-height:12.5px;color:#333;font-weight:normal;-webkit-text-stroke:0.4px #333;">Job status</div>
<div class="a" style="left:230px;top:464px;width:1px;height:14px;background:#cfcfcf;"></div>
<div class="a" style="left:233px;top:464px;width:1px;height:14px;background:#cfcfcf;"></div>
<div class="a" style="left:236px;top:62px;width:261px;height:421px;background:#fff;"></div>
<div class="t" style="left:255.5px;top:77.32px;font-size:13.8px;line-height:13.8px;color:#333;font-weight:normal;-webkit-text-stroke:0.45px #333;">Filters</div>
<div class="a" style="left:428px;top:69px;width:29px;height:29px;background:#0e74a8;border-radius:3px;"></div>
<svg class="a" style="left:436px;top:77px;" width="14" height="12" viewBox="0 0 14 12"><path d="M2,6.5 L5.2,9.7 L12,2.8" fill="none" stroke="#fff" stroke-width="1.3"/></svg>
<div class="a" style="left:461px;top:69px;width:28px;height:29px;background:#fff;border:1px solid #e0e0e0;border-radius:3px;box-sizing:border-box;"></div>
<svg class="a" style="left:469px;top:77px;" width="12" height="12" viewBox="0 0 12 12"><path d="M2.5,2.5 L9.5,9.5 M9.5,2.5 L2.5,9.5" stroke="#555" stroke-width="1"/></svg>
<div class="a" style="left:237px;top:103px;width:259px;height:1px;background:#e6e6e6;"></div>
<div class="a" style="left:237px;top:140px;width:259px;height:1px;background:#ebebeb;"></div>
<div class="a" style="left:236px;top:176px;width:261px;height:35.5px;background:#e0eef6;"></div>
<svg class="a" style="left:251px;top:116px;" width="8" height="10" viewBox="0 0 8 10"><path d="M2.5,2 L5.5,5 L2.5,8" fill="none" stroke="#555" stroke-width="1"/></svg>
<svg class="a" style="left:251px;top:153px;" width="8" height="10" viewBox="0 0 8 10"><path d="M2.5,2 L5.5,5 L2.5,8" fill="none" stroke="#bbb" stroke-width="1"/></svg>
<svg class="a" style="left:250px;top:189px;" width="10" height="8" viewBox="0 0 10 8"><path d="M2,2.5 L5,5.5 L8,2.5" fill="none" stroke="#555" stroke-width="1"/></svg>
<svg class="a" style="left:260px;top:114px;" width="15" height="14" viewBox="0 0 15 14"><path d="M1.5,6 L6.5,1.5 L11.5,6.5 L7,11.5 L3.5,10 Z" fill="#1a78b0"/><path d="M2.5,6 L6.5,2.8 L10.2,6.5 Z" fill="#8cc4e2"/><path d="M5,1 L8.5,4" stroke="#1a78b0" stroke-width="1.1"/><path d="M12.3,8.5 C11.5,10 11,11 11.8,12 C12.4,12.6 13.5,12.2 13.5,11.2 C13.5,10.5 12.8,9.5 12.3,8.5 Z" fill="#1a78b0"/></svg>
<svg class="a" style="left:261px;top:151px;" width="12" height="14" viewBox="0 0 12 14"><path d="M1.5,3 A4.5,2 0 0 1 10.5,3 V11 A4.5,2 0 0 1 1.5,11 Z" fill="#eaeaea" stroke="#d4d4d4" stroke-width="0.8"/><path d="M6,1 V13" stroke="#c8c8c8" stroke-width="0.8"/><path d="M3,6 H5 M3,8.5 H5 M7,6 H9 M7,8.5 H9" stroke="#d0d0d0" stroke-width="0.7"/></svg>
<svg class="a" style="left:261px;top:187px;" width="12" height="14" viewBox="0 0 12 14"><path d="M1.5,3 A4.5,2 0 0 1 10.5,3 V11 A4.5,2 0 0 1 1.5,11 Z" fill="#d0e7f3" stroke="#b0d4e8" stroke-width="0.8"/><path d="M3.2,2.8 L6,6.5 L8.8,2.8" fill="none" stroke="#1a78b0" stroke-width="1"/><ellipse cx="6" cy="8.5" rx="2.3" ry="1.8" fill="#1a78b0"/><path d="M3.8,9.8 V12.5 M5.3,10 V13 M6.8,10 V13 M8.3,9.8 V12.5" stroke="#1a78b0" stroke-width="0.9"/></svg>
<div class="t" style="left:282px;top:114.82px;font-size:12.5px;line-height:12.5px;color:#333;font-weight:normal;-webkit-text-stroke:0.2px #333;">Parts Color</div>
<div class="t" style="left:282px;top:151.62px;font-size:12.5px;line-height:12.5px;color:#a8a8a8;font-weight:normal;-webkit-text-stroke:0.2px #a8a8a8;">Cutting Plane 1</div>
<div class="t" style="left:282px;top:187.82px;font-size:12.5px;line-height:12.5px;color:#333;font-weight:normal;-webkit-text-stroke:0.2px #333;">Particle Trace 1</div>
<svg class="a" style="left:442px;top:152px;" width="11" height="12" viewBox="0 0 11 12"><path d="M1,2.5 H10 M4,2.5 V1 H7 V2.5" fill="none" stroke="#bbb" stroke-width="1"/><path d="M2,3.5 H9 L8.5,11.5 H2.5 Z" fill="#e8e8e8" stroke="#bbb" stroke-width="0.8"/><path d="M4,5 V10 M5.5,5 V10 M7,5 V10" stroke="#bbb" stroke-width="0.7"/></svg>
<svg class="a" style="left:442px;top:188px;" width="11" height="12" viewBox="0 0 11 12"><path d="M1,2.5 H10 M4,2.5 V1 H7 V2.5" fill="none" stroke="#bbb" stroke-width="1"/><path d="M2,3.5 H9 L8.5,11.5 H2.5 Z" fill="#e8e8e8" stroke="#bbb" stroke-width="0.8"/><path d="M4,5 V10 M5.5,5 V10 M7,5 V10" stroke="#bbb" stroke-width="0.7"/></svg>
<svg class="a" style="left:461.4px;top:112.5px;" width="24" height="18" viewBox="0 0 24 18"><rect x="3" y="5.5" width="14" height="7" rx="3.5" fill="#dfeaf0"/><circle cx="16" cy="9" r="7.7" fill="#0e74a8"/></svg>
<svg class="a" style="left:461.5px;top:148.5px;" width="26" height="18" viewBox="0 0 26 18"><rect x="6" y="5.5" width="15" height="7" rx="3.5" fill="#f4f4f4" stroke="#eee"/><circle cx="8.5" cy="9" r="7" fill="#fff" stroke="#e2e2e2"/></svg>
<svg class="a" style="left:461.4px;top:185px;" width="24" height="18" viewBox="0 0 24 18"><rect x="3" y="5.5" width="14" height="7" rx="3.5" fill="#f6f9fb"/><circle cx="16" cy="9" r="7.7" fill="#0e74a8"/></svg>
<div class="t" style="left:248px;top:229.07px;font-size:11.5px;line-height:11.5px;color:#333;font-weight:normal;">Pick Position</div>
<div class="a" style="left:460px;top:221px;width:25px;height:25px;background:#fff;border:1px solid #e4e4e4;border-radius:3px;box-sizing:border-box;"></div>
<svg class="a" style="left:465px;top:226px;" width="15" height="15" viewBox="0 0 15 15"><circle cx="7.5" cy="7.5" r="5" fill="none" stroke="#777" stroke-width="1"/><circle cx="7.5" cy="7.5" r="1.6" fill="none" stroke="#777" stroke-width="0.9"/></svg>
<div class="t" style="left:248px;top:261.27px;font-size:11.5px;line-height:11.5px;color:#333;font-weight:normal;"># Seeds horizontally</div>
<div class="a" style="left:364px;top:264px;width:72px;height:4px;background:#cfcfcf;border-radius:2px;"></div>
<div class="a" style="left:364px;top:264px;width:29.5px;height:4px;background:#0e74a8;border-radius:2px;"></div>
<svg class="a" style="left:385.5px;top:258px;" width="16" height="16" viewBox="0 0 16 16"><circle cx="8" cy="8" r="6.5" fill="#fff" stroke="#d4d4d4" stroke-width="1"/></svg>
<div class="t" style="left:444px;top:261.87px;font-size:11.5px;line-height:11.5px;color:#333;font-weight:normal;">20</div>
<div class="a" style="left:440px;top:279px;width:45px;height:1px;background:#e0e0e0;"></div>
<div class="t" style="left:248px;top:293.87px;font-size:11.5px;line-height:11.5px;color:#333;font-weight:normal;"># Seeds vertically</div>
<div class="a" style="left:364px;top:296.4px;width:72px;height:4px;background:#cfcfcf;border-radius:2px;"></div>
<div class="a" style="left:364px;top:296.4px;width:29.5px;height:4px;background:#0e74a8;border-radius:2px;"></div>
<svg class="a" style="left:385.5px;top:290.4px;" width="16" height="16" viewBox="0 0 16 16"><circle cx="8" cy="8" r="6.5" fill="#fff" stroke="#d4d4d4" stroke-width="1"/></svg>
<div class="t" style="left:444px;top:294.07px;font-size:11.5px;line-height:11.5px;color:#333;font-weight:normal;">20</div>
<div class="a" style="left:440px;top:312px;width:45px;height:1px;background:#e0e0e0;"></div>
<div class="t" style="left:248px;top:326.47px;font-size:11.5px;line-height:11.5px;color:#333;font-weight:normal;">Spacing</div>
<div class="a" style="left:364px;top:328.6px;width:72px;height:4px;background:#cfcfcf;border-radius:2px;"></div>
<svg class="a" style="left:362.5px;top:322.6px;" width="16" height="16" viewBox="0 0 16 16"><circle cx="8" cy="8" r="6.5" fill="#fff" stroke="#d4d4d4" stroke-width="1"/></svg>
<div class="t" style="left:444px;top:326.67px;font-size:11.5px;line-height:11.5px;color:#333;font-weight:normal;">5e-2</div>
<div class="a" style="left:440px;top:344px;width:45px;height:1px;background:#e0e0e0;"></div>
<div class="t" style="left:248px;top:357.87px;font-size:11.5px;line-height:11.5px;color:#333;font-weight:normal;">Coloring</div>
<div class="t" style="left:368px;top:355.57px;font-size:11.5px;line-height:11.5px;color:#333;font-weight:normal;">Velocity Magnitude</div>
<svg class="a" style="left:473px;top:358px;" width="10" height="8" viewBox="0 0 10 8"><path d="M1.5,2 L5,5.5 L8.5,2" fill="none" stroke="#777" stroke-width="0.9"/></svg>
<div class="a" style="left:364px;top:377px;width:121px;height:1px;background:#e0e0e0;"></div>
<div class="t" style="left:248px;top:390.47px;font-size:11.5px;line-height:11.5px;color:#333;font-weight:normal;">Representation</div>
<div class="t" style="left:368px;top:390.07px;font-size:11.5px;line-height:11.5px;color:#333;font-weight:normal;">Cylinders</div>
<svg class="a" style="left:473px;top:391px;" width="10" height="8" viewBox="0 0 10 8"><path d="M1.5,2 L5,5.5 L8.5,2" fill="none" stroke="#777" stroke-width="0.9"/></svg>
<div class="a" style="left:364px;top:409px;width:121px;height:1px;background:#e0e0e0;"></div>
<div class="t" style="left:248px;top:422.77px;font-size:11.5px;line-height:11.5px;color:#333;font-weight:normal;">Size</div>
<div class="a" style="left:364px;top:425.8px;width:72px;height:4px;background:#cfcfcf;border-radius:2px;"></div>
<svg class="a" style="left:362.5px;top:419.8px;" width="16" height="16" viewBox="0 0 16 16"><circle cx="8" cy="8" r="6.5" fill="#fff" stroke="#d4d4d4" stroke-width="1"/></svg>
<div class="t" style="left:444px;top:423.07px;font-size:11.5px;line-height:11.5px;color:#333;font-weight:normal;">1e-2</div>
<div class="a" style="left:440px;top:441px;width:45px;height:1px;background:#e0e0e0;"></div>
<div class="t" style="left:248px;top:456.07px;font-size:11.5px;line-height:11.5px;color:#333;font-weight:normal;">Trace both directions</div>
<svg class="a" style="left:461.4px;top:451.5px;" width="24" height="18" viewBox="0 0 24 18"><rect x="3" y="5.5" width="14" height="7" rx="3.5" fill="#dfeaf0"/><circle cx="16" cy="9" r="7.7" fill="#0e74a8"/></svg>
<div class="a" style="left:1018px;top:62px;width:161px;height:43px;background:rgba(246,245,242,0.96);border-radius:5px;"></div>
<div class="a" style="left:1061px;top:71px;width:1px;height:24px;background:#e2e0da;"></div>
<div class="a" style="left:1100px;top:71px;width:1px;height:24px;background:#e2e0da;"></div>
<div class="a" style="left:1140px;top:66px;width:34px;height:34px;border:1px solid #c6def0;border-radius:4px;box-sizing:border-box;background:#f7f7f5;"></div>
<svg class="a" style="left:1030.5px;top:75px;" width="18" height="18" viewBox="0 0 18 18"><g fill="none" stroke="#555" stroke-width="0.8"><path d="M9,2.5 L14.5,5.5 L9,8.5 L3.5,5.5 Z"/><path d="M3.5,5.5 L9,8.5 V15.5 L3.5,12.5 Z"/><path d="M14.5,5.5 L9,8.5 V15.5 L14.5,12.5 Z"/></g><path d="M3.5,6 V12.5 M14.5,6 V12.5" stroke="#bbb" stroke-width="1.2"/><path d="M2,12.5 H5 M13,12.5 H16 M9,1.5 V3" stroke="#666" stroke-width="0.6"/></svg>
<div class="a" style="left:1048px;top:91px;width:3px;height:1px;background:#777;"></div>
<div class="a" style="left:1050px;top:88.5px;width:1px;height:3px;background:#777;"></div>
<svg class="a" style="left:1070.5px;top:75px;" width="18" height="18" viewBox="0 0 18 18"><path d="M9,2.5 L14.5,5.5 L9,8.5 L3.5,5.5 Z" fill="#f4f4f4" stroke="#555" stroke-width="0.8"/><path d="M3.5,5.5 L9,8.5 V15.5 L3.5,12.5 Z" fill="#9a9a9a" stroke="#555" stroke-width="0.8"/><path d="M14.5,5.5 L9,8.5 V15.5 L14.5,12.5 Z" fill="#c4c4c4" stroke="#555" stroke-width="0.8"/><path d="M9,4.5 V6.5" stroke="#444" stroke-width="0.8"/></svg>
<div class="a" style="left:1087.5px;top:92px;width:3px;height:1px;background:#777;"></div>
<div class="a" style="left:1089.5px;top:89.5px;width:1px;height:3px;background:#777;"></div>
<svg class="a" style="left:1110px;top:75px;" width="18" height="18" viewBox="0 0 18 18"><path d="M9,2.5 L14.5,5.5 L9,8.5 L3.5,5.5 Z" fill="#f0c080" stroke="#222" stroke-width="0.9"/><path d="M3.5,5.5 L9,8.5 V15.5 L3.5,12.5 Z" fill="#e04a10" stroke="#222" stroke-width="0.9"/><path d="M14.5,5.5 L9,8.5 V15.5 L14.5,12.5 Z" fill="#eaa020" stroke="#222" stroke-width="0.9"/><path d="M5,8 L7.5,12 M11,9.5 L13,12" stroke="#f0d020" stroke-width="1"/><circle cx="9" cy="2.5" r="1.3" fill="#111"/><circle cx="14.5" cy="5.5" r="1.3" fill="#111"/><circle cx="14.5" cy="12.5" r="1.3" fill="#111"/><circle cx="9" cy="15.5" r="1.3" fill="#111"/><circle cx="3.5" cy="12.5" r="1.3" fill="#111"/><circle cx="3.5" cy="5.5" r="1.3" fill="#111"/><circle cx="9" cy="8.5" r="1.3" fill="#111"/></svg>
<svg class="a" style="left:1149px;top:75px;" width="18" height="18" viewBox="0 0 18 18"><path d="M9,2.5 L14.5,5.5 L9,8.5 L3.5,5.5 Z" fill="#fff" stroke="#222" stroke-width="0.9"/><path d="M3.5,5.5 L9,8.5 V15.5 L3.5,12.5 Z" fill="#e04a10" stroke="#222" stroke-width="0.9"/><path d="M14.5,5.5 L9,8.5 V15.5 L14.5,12.5 Z" fill="#fff" stroke="#222" stroke-width="0.9"/><path d="M5,8 L7.5,12" stroke="#f0d020" stroke-width="1"/><circle cx="9" cy="2.5" r="1.3" fill="#111"/><circle cx="14.5" cy="5.5" r="1.3" fill="#111"/><circle cx="14.5" cy="12.5" r="1.3" fill="#111"/><circle cx="9" cy="15.5" r="1.3" fill="#111"/><circle cx="3.5" cy="12.5" r="1.3" fill="#111"/><circle cx="3.5" cy="5.5" r="1.3" fill="#111"/><circle cx="9" cy="8.5" r="1.3" fill="#111"/></svg>
<div class="t" style="left:705px;top:809.57px;font-size:11.5px;line-height:11.5px;color:#444;font-weight:normal;-webkit-text-stroke:0.35px #444;">Pressure</div>
<svg class="a" style="left:754.5px;top:808.5px;" width="13" height="13" viewBox="0 0 13 13"><circle cx="6.5" cy="6.5" r="6" fill="#fff" stroke="#ddd"/><path d="M4,4.5 H9 M4,6.5 H9 M4,8.5 H9" stroke="#666" stroke-width="0.8"/></svg>
<div class="t" style="left:791px;top:808.47px;font-size:11.5px;line-height:11.5px;color:#444;font-weight:normal;">Pa</div>
<svg class="a" style="left:846px;top:810px;" width="10" height="8" viewBox="0 0 10 8"><path d="M1.5,2 L5,5.5 L8.5,2" fill="none" stroke="#888" stroke-width="0.9"/></svg>
<div class="a" style="left:787px;top:828px;width:72px;height:1px;background:#e4e4e4;"></div>
<div class="t" style="left:1038.5px;top:809.57px;font-size:11.5px;line-height:11.5px;color:#444;font-weight:normal;letter-spacing:0.2px;-webkit-text-stroke:0.35px #444;">Velocity Magnitude</div>
<svg class="a" style="left:1144px;top:808.5px;" width="13" height="13" viewBox="0 0 13 13"><circle cx="6.5" cy="6.5" r="6" fill="#fff" stroke="#ddd"/><path d="M4,4.5 H9 M4,6.5 H9 M4,8.5 H9" stroke="#666" stroke-width="0.8"/></svg>
<div class="t" style="left:1180.5px;top:808.47px;font-size:11.5px;line-height:11.5px;color:#444;font-weight:normal;">m/s</div>
<svg class="a" style="left:1236px;top:810px;" width="10" height="8" viewBox="0 0 10 8"><path d="M1.5,2 L5,5.5 L8.5,2" fill="none" stroke="#888" stroke-width="0.9"/></svg>
<div class="a" style="left:1176px;top:828px;width:72px;height:1px;background:#e4e4e4;"></div>
<svg class="a" style="left:644px;top:866.5px;" width="270" height="14.5" viewBox="0 0 270 14.5"><rect x="0.00" y="0" width="13.80" height="14.5" fill="#0a14ff"/><rect x="13.50" y="0" width="13.80" height="14.5" fill="#0a2af2"/><rect x="27.00" y="0" width="13.80" height="14.5" fill="#0050ff"/><rect x="40.50" y="0" width="13.80" height="14.5" fill="#0878ff"/><rect x="54.00" y="0" width="13.80" height="14.5" fill="#1490f0"/><rect x="67.50" y="0" width="13.80" height="14.5" fill="#18a0f0"/><rect x="81.00" y="0" width="13.80" height="14.5" fill="#10b8ff"/><rect x="94.50" y="0" width="13.80" height="14.5" fill="#10d0ff"/><rect x="108.00" y="0" width="13.80" height="14.5" fill="#00f0ff"/><rect x="121.50" y="0" width="13.80" height="14.5" fill="#10f0c0"/><rect x="135.00" y="0" width="13.80" height="14.5" fill="#10ee50"/><rect x="148.50" y="0" width="13.80" height="14.5" fill="#40f010"/><rect x="162.00" y="0" width="13.80" height="14.5" fill="#a8f010"/><rect x="175.50" y="0" width="13.80" height="14.5" fill="#ffd800"/><rect x="189.00" y="0" width="13.80" height="14.5" fill="#ffd000"/><rect x="202.50" y="0" width="13.80" height="14.5" fill="#ffc010"/><rect x="216.00" y="0" width="13.80" height="14.5" fill="#ff9c10"/><rect x="229.50" y="0" width="13.80" height="14.5" fill="#ff7010"/><rect x="243.00" y="0" width="13.80" height="14.5" fill="#ff4010"/><rect x="256.50" y="0" width="13.80" height="14.5" fill="#ff2010"/></svg>
<svg class="a" style="left:644px;top:858.5px;overflow:visible;" width="272" height="8" viewBox="0 0 272 8"><rect x="-0.60" y="0" width="1.4" height="8" fill="#555"/><rect x="10.30" y="4" width="1" height="4" fill="#bbb"/><rect x="21.10" y="4" width="1" height="4" fill="#bbb"/><rect x="31.90" y="4" width="1" height="4" fill="#bbb"/><rect x="42.70" y="4" width="1" height="4" fill="#bbb"/><rect x="53.40" y="0" width="1.4" height="8" fill="#555"/><rect x="64.30" y="4" width="1" height="4" fill="#bbb"/><rect x="75.10" y="4" width="1" height="4" fill="#bbb"/><rect x="85.90" y="4" width="1" height="4" fill="#bbb"/><rect x="96.70" y="4" width="1" height="4" fill="#bbb"/><rect x="107.40" y="0" width="1.4" height="8" fill="#555"/><rect x="118.30" y="4" width="1" height="4" fill="#bbb"/><rect x="129.10" y="4" width="1" height="4" fill="#bbb"/><rect x="139.90" y="4" width="1" height="4" fill="#bbb"/><rect x="150.70" y="4" width="1" height="4" fill="#bbb"/><rect x="161.40" y="0" width="1.4" height="8" fill="#555"/><rect x="172.30" y="4" width="1" height="4" fill="#bbb"/><rect x="183.10" y="4" width="1" height="4" fill="#bbb"/><rect x="193.90" y="4" width="1" height="4" fill="#bbb"/><rect x="204.70" y="4" width="1" height="4" fill="#bbb"/><rect x="215.40" y="0" width="1.4" height="8" fill="#555"/><rect x="226.30" y="4" width="1" height="4" fill="#bbb"/><rect x="237.10" y="4" width="1" height="4" fill="#bbb"/><rect x="247.90" y="4" width="1" height="4" fill="#bbb"/><rect x="258.70" y="4" width="1" height="4" fill="#bbb"/><rect x="269.40" y="0" width="1.4" height="8" fill="#555"/></svg>
<div class="t" style="left:628.5px;top:846.03px;font-size:10px;line-height:10px;color:#333;font-weight:normal;">-1129</div>
<div class="t" style="left:686.5px;top:846.03px;font-size:10px;line-height:10px;color:#333;font-weight:normal;">-849.1</div>
<div class="t" style="left:739px;top:846.03px;font-size:10px;line-height:10px;color:#333;font-weight:normal;">-569.7</div>
<div class="t" style="left:791px;top:846.03px;font-size:10px;line-height:10px;color:#333;font-weight:normal;">-290.3</div>
<div class="t" style="left:844px;top:846.03px;font-size:10px;line-height:10px;color:#333;font-weight:normal;">-10.85</div>
<div class="t" style="left:904.3px;top:846.03px;font-size:10px;line-height:10px;color:#333;font-weight:normal;">268.6</div>
<svg class="a" style="left:639px;top:882.5px;" width="10" height="9" viewBox="0 0 10 9"><path d="M5,0 L10,8.5 H0 Z" fill="#222"/></svg>
<svg class="a" style="left:909px;top:882.5px;" width="10" height="9" viewBox="0 0 10 9"><path d="M5,0 L10,8.5 H0 Z" fill="#222"/></svg>
<div class="a" style="left:622.5px;top:856px;width:38px;height:1px;background:#e4e4e4;"></div>
<div class="a" style="left:895px;top:856px;width:36px;height:1px;background:#e4e4e4;"></div>
<svg class="a" style="left:1006px;top:866.5px;" width="270" height="14.5" viewBox="0 0 270 14.5"><rect x="0.00" y="0" width="13.80" height="14.5" fill="#0a14ff"/><rect x="13.50" y="0" width="13.80" height="14.5" fill="#0a2af2"/><rect x="27.00" y="0" width="13.80" height="14.5" fill="#0050ff"/><rect x="40.50" y="0" width="13.80" height="14.5" fill="#0878ff"/><rect x="54.00" y="0" width="13.80" height="14.5" fill="#1490f0"/><rect x="67.50" y="0" width="13.80" height="14.5" fill="#18a0f0"/><rect x="81.00" y="0" width="13.80" height="14.5" fill="#10b8ff"/><rect x="94.50" y="0" width="13.80" height="14.5" fill="#10d0ff"/><rect x="108.00" y="0" width="13.80" height="14.5" fill="#00f0ff"/><rect x="121.50" y="0" width="13.80" height="14.5" fill="#10f0c0"/><rect x="135.00" y="0" width="13.80" height="14.5" fill="#10ee50"/><rect x="148.50" y="0" width="13.80" height="14.5" fill="#40f010"/><rect x="162.00" y="0" width="13.80" height="14.5" fill="#a8f010"/><rect x="175.50" y="0" width="13.80" height="14.5" fill="#ffd800"/><rect x="189.00" y="0" width="13.80" height="14.5" fill="#ffd000"/><rect x="202.50" y="0" width="13.80" height="14.5" fill="#ffc010"/><rect x="216.00" y="0" width="13.80" height="14.5" fill="#ff9c10"/><rect x="229.50" y="0" width="13.80" height="14.5" fill="#ff7010"/><rect x="243.00" y="0" width="13.80" height="14.5" fill="#ff4010"/><rect x="256.50" y="0" width="13.80" height="14.5" fill="#ff2010"/></svg>
<svg class="a" style="left:1006px;top:858.5px;overflow:visible;" width="272" height="8" viewBox="0 0 272 8"><rect x="-0.60" y="0" width="1.4" height="8" fill="#555"/><rect x="10.30" y="4" width="1" height="4" fill="#bbb"/><rect x="21.10" y="4" width="1" height="4" fill="#bbb"/><rect x="31.90" y="4" width="1" height="4" fill="#bbb"/><rect x="42.70" y="4" width="1" height="4" fill="#bbb"/><rect x="53.40" y="0" width="1.4" height="8" fill="#555"/><rect x="64.30" y="4" width="1" height="4" fill="#bbb"/><rect x="75.10" y="4" width="1" height="4" fill="#bbb"/><rect x="85.90" y="4" width="1" height="4" fill="#bbb"/><rect x="96.70" y="4" width="1" height="4" fill="#bbb"/><rect x="107.40" y="0" width="1.4" height="8" fill="#555"/><rect x="118.30" y="4" width="1" height="4" fill="#bbb"/><rect x="129.10" y="4" width="1" height="4" fill="#bbb"/><rect x="139.90" y="4" width="1" height="4" fill="#bbb"/><rect x="150.70" y="4" width="1" height="4" fill="#bbb"/><rect x="161.40" y="0" width="1.4" height="8" fill="#555"/><rect x="172.30" y="4" width="1" height="4" fill="#bbb"/><rect x="183.10" y="4" width="1" height="4" fill="#bbb"/><rect x="193.90" y="4" width="1" height="4" fill="#bbb"/><rect x="204.70" y="4" width="1" height="4" fill="#bbb"/><rect x="215.40" y="0" width="1.4" height="8" fill="#555"/><rect x="226.30" y="4" width="1" height="4" fill="#bbb"/><rect x="237.10" y="4" width="1" height="4" fill="#bbb"/><rect x="247.90" y="4" width="1" height="4" fill="#bbb"/><rect x="258.70" y="4" width="1" height="4" fill="#bbb"/><rect x="269.40" y="0" width="1.4" height="8" fill="#555"/></svg>
<div class="t" style="left:1000.5px;top:846.03px;font-size:10px;line-height:10px;color:#333;font-weight:normal;">0</div>
<div class="t" style="left:1055.5px;top:846.03px;font-size:10px;line-height:10px;color:#333;font-weight:normal;">8.7</div>
<div class="t" style="left:1105.5px;top:846.03px;font-size:10px;line-height:10px;color:#333;font-weight:normal;">17.4</div>
<div class="t" style="left:1157.7px;top:846.03px;font-size:10px;line-height:10px;color:#333;font-weight:normal;">26.1</div>
<div class="t" style="left:1210px;top:846.03px;font-size:10px;line-height:10px;color:#333;font-weight:normal;">34.8</div>
<div class="t" style="left:1265.7px;top:846.03px;font-size:10px;line-height:10px;color:#333;font-weight:normal;">43.47</div>
<svg class="a" style="left:1001px;top:882.5px;" width="10" height="9" viewBox="0 0 10 9"><path d="M5,0 L10,8.5 H0 Z" fill="#222"/></svg>
<svg class="a" style="left:1271px;top:882.5px;" width="10" height="9" viewBox="0 0 10 9"><path d="M5,0 L10,8.5 H0 Z" fill="#222"/></svg>
<div class="a" style="left:997px;top:856px;width:12px;height:1px;background:#e4e4e4;"></div>
<div class="a" style="left:1259px;top:856px;width:39px;height:1px;background:#e4e4e4;"></div>
<div class="a" style="left:108px;top:1px;width:66px;height:51px;border:3px solid #4a86e8;box-sizing:border-box;"></div>
<div class="a" style="left:447px;top:214px;width:49px;height:38px;border:3px solid #4a86e8;box-sizing:border-box;"></div>
<div class="a" style="left:237px;top:251px;width:259px;height:194px;border:3px solid #4a86e8;box-sizing:border-box;"></div>
<div class="a" style="left:122.19999999999999px;top:60.8px;width:40px;height:40px;border-radius:50%;background:#4a86e8;"></div>
<svg class="a" style="left:132.2px;top:68.8px;" width="20" height="24" viewBox="0 0 20 24"><path d="M10,2.2 H13.2 V23.4 H10 V6.6 L5,8.4 V5.6 L9.6,2.2 Z" fill="#fff"/></svg>
<div class="a" style="left:510px;top:212.9px;width:40px;height:40px;border-radius:50%;background:#4a86e8;"></div>
<div class="t" style="left:430px;width:200px;text-align:center;top:218.53px;font-size:29.5px;line-height:29.5px;color:#fff;font-weight:normal;-webkit-text-stroke:0.35px #fff;">2</div>
<div class="a" style="left:994.1px;top:745px;width:40px;height:40px;border-radius:50%;background:#4a86e8;"></div>
<div class="t" style="left:914.1px;width:200px;text-align:center;top:750.63px;font-size:29.5px;line-height:29.5px;color:#fff;font-weight:normal;-webkit-text-stroke:0.35px #fff;">3</div>
<div class="a" style="left:502.9px;top:328.9px;width:40px;height:40px;border-radius:50%;background:#4a86e8;"></div>
<div class="t" style="left:422.9px;width:200px;text-align:center;top:334.53px;font-size:29.5px;line-height:29.5px;color:#fff;font-weight:normal;-webkit-text-stroke:0.35px #fff;">4</div>
<svg class="a" style="left:1040px;top:690px;" width="130" height="70" viewBox="0 0 130 70"><path d="M7,60.8 L110,13.6" stroke="#4a86e8" stroke-width="5" stroke-linecap="round"/><path d="M86,9.5 L118,9.5 L101,36 L94,31 L104,17 L86,17 Z" fill="#4a86e8"/></svg>
</body></html>
